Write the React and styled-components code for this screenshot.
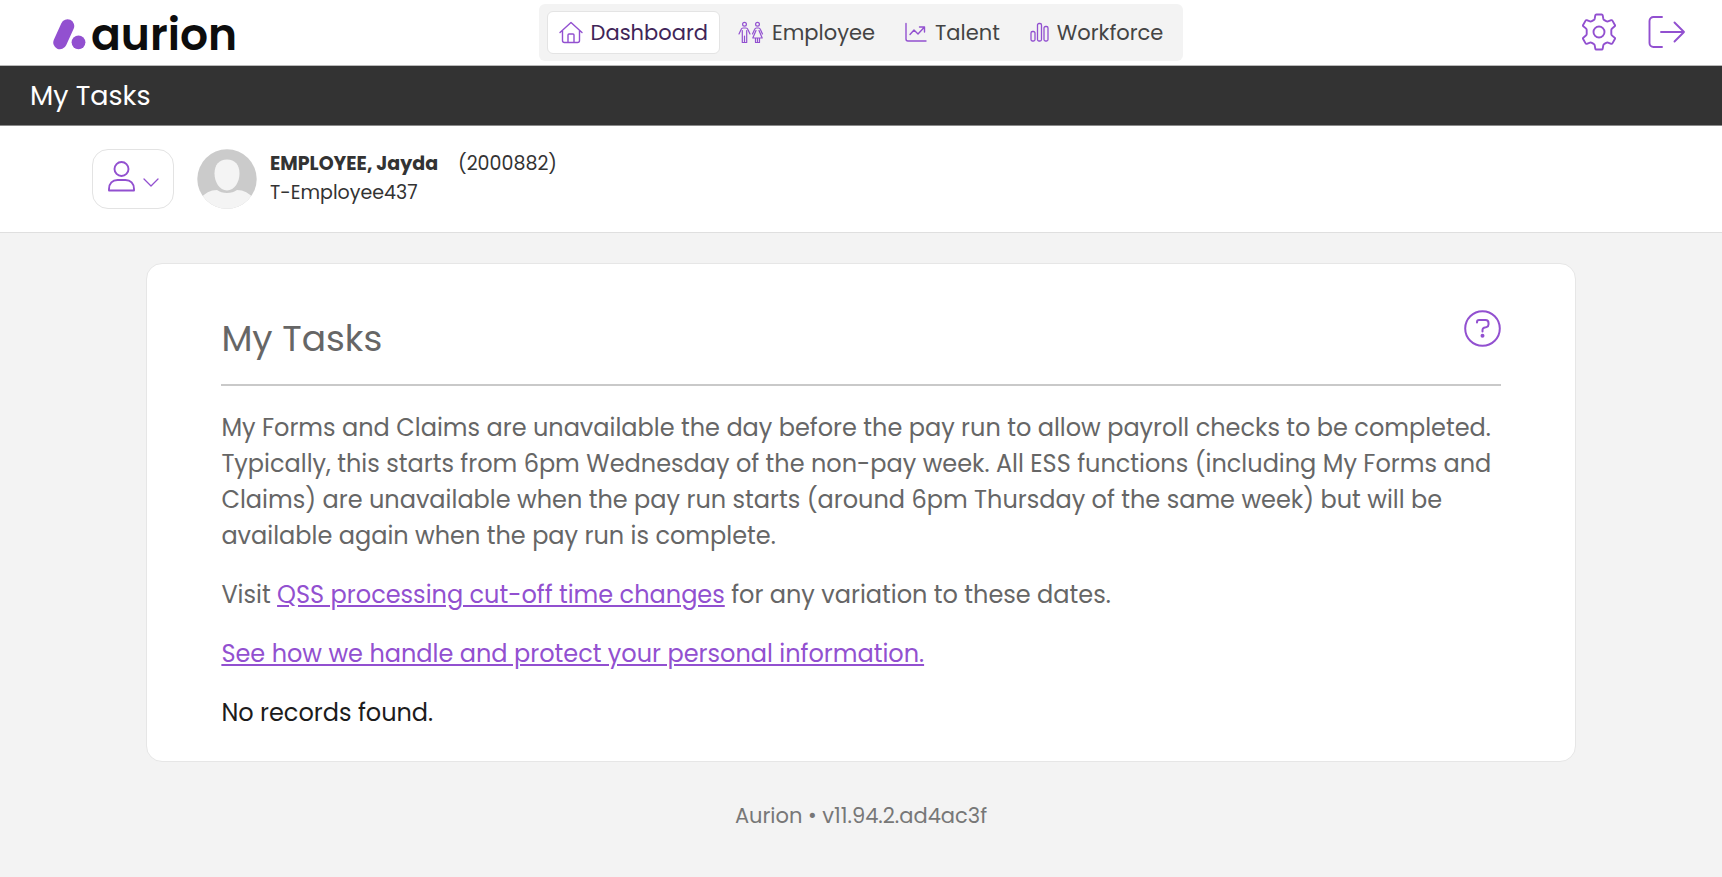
import React from "react";
import styled, { createGlobalStyle, css } from "styled-components";

const purple = "#9250d0";

const GlobalStyle = createGlobalStyle`
  * { box-sizing: border-box; }
  body {
    margin: 0;
    background: #f3f3f3;
    color: #333;
    font-family: Poppins, Inter, "Open Sans", sans-serif;
    font-feature-settings: "cv11" 1;
    font-size: 24px;
    line-height: 36px;
  }
  h1, h2, p { margin: 0; font-weight: 400; }
  button { font: inherit; color: inherit; background: none; border: 0; padding: 0; cursor: pointer; }
  svg { display: block; flex: none; }
`;

const Header = styled.header`
  display: grid;
  grid-template-columns: 1fr auto 1fr;
  align-items: center;
  height: 66px;
  background: #fff;
  border-bottom: 1px solid #b9b9b9;
`;

const Logo = styled.a`
  display: flex;
  align-items: center;
  gap: 4px;
  justify-self: start;
  padding: 4px 0 0 53px;
  color: #0d0d0d;
  text-decoration: none;
`;

const LogoName = styled.span`
  font-size: 44px;
  line-height: 60px;
  font-weight: 600;
`;

const Nav = styled.nav`
  display: flex;
  gap: 6px;
  padding: 7px 8px;
  border-radius: 6px;
  background: #f3f3f3;
`;

const NavItem = styled.a`
  display: flex;
  align-items: center;
  gap: 8px;
  height: 43px;
  padding: 0 11px;
  border: 1px solid transparent;
  border-radius: 6px;
  color: #444;
  font-size: 21px;
  line-height: 32px;
  text-decoration: none;
  ${(p) => p.$active && css`
    background: #fff;
    border-color: #e4e4e4;
    color: #3f2558;
  `}
`;

const Tools = styled.div`
  display: flex;
  align-items: center;
  gap: 32px;
  justify-self: end;
  padding: 0 36px 2px 0;
`;

const TitleBar = styled.h1`
  && {
    padding: 12px 30px;
    background: #333;
    border-bottom: 1px solid #8a8a8a;
    color: #fff;
    font-size: 27px;
    line-height: 35px;
  }
`;

const Person = styled.section`
  display: flex;
  align-items: flex-start;
  padding: 23px 92px;
  height: 107px;
  background: #fff;
  border-bottom: 1px solid #dfdfdf;
`;

const PersonMenu = styled.button`
  && {
    display: flex;
    align-items: center;
    justify-content: center;
    gap: 8px;
    width: 82px;
    height: 60px;
    margin-right: 23px;
    border: 1px solid #e3e3e3;
    border-radius: 16px;
  }
`;

const PersonText = styled.div`
  margin-left: 13px;
  font-size: 19px;
  line-height: 29px;
`;

const PersonId = styled.span`
  margin-left: 20px;
`;

const Card = styled.main`
  width: 83%;
  margin: 30px auto 0;
  padding: 46px 74px 30px;
  background: #fff;
  border: 1px solid #e6e6e6;
  border-radius: 16px;
  color: #666;
`;

const CardHead = styled.div`
  display: flex;
  justify-content: space-between;
  align-items: flex-start;
  padding-bottom: 18px;
  margin-bottom: 24px;
  border-bottom: 2px solid #c9c9c9;
`;

const CardTitle = styled.h2`
  padding-top: 2px;
  font-size: 36px;
  line-height: 54px;
`;

const Paragraph = styled.p`
  && { margin-bottom: 23px; }
`;

const Status = styled.p`
  color: #1c1c1c;
`;

const TextLink = styled.a`
  color: ${purple};
  text-decoration: underline;
`;

const Footer = styled.footer`
  padding: 38px 0 45px;
  color: #777;
  font-size: 21px;
  line-height: 32px;
  text-align: center;
`;

const Icon = ({ w, h, sw = 1, children }) => (
  <svg
    width={w}
    height={h}
    viewBox={`0 0 ${w} ${h}`}
    fill="none"
    stroke={purple}
    strokeWidth={sw}
    strokeLinecap="round"
    strokeLinejoin="round"
    aria-hidden="true"
  >
    {children}
  </svg>
);

const HomeIcon = () => (
  <Icon w={24} h={24} sw={1.4}>
    <path d="M1 11.500 12 1.500l11 10M3.500 9.500V19.500a2 2 0 0 0 2 2h13a2 2 0 0 0 2-2V9.500M9 21.500V14a1 1 0 0 1 1-1h4a1 1 0 0 1 1 1v7.500" />
  </Icon>
);

const EmployeeIcon = () => (
  <Icon w={26} h={24} sw={1.2}>
    <circle cx="6.500" cy="3.300" r="1.900" />
    <path d="M1 13 3.200 8.200Q3.700 7 5 7h3q1.300 0 1.800 1.200L12 13M4.300 9.500V21.500M8.700 9.500V21.500M6.500 15v6.500M4.300 21.500h2.200M6.500 21.500h2.200" />
    <circle cx="19.500" cy="3.300" r="1.900" />
    <path d="M14.500 13l2.200-4.800Q17.200 7 18.300 7h2.400q1.100 0 1.600 1.200L24.500 13M18 9.500l-3.200 7.500h9.400L21 9.500M17.500 17v4.500h2M21.500 17v4.500h-2M19.500 17v4.500" />
  </Icon>
);

const TalentIcon = () => (
  <Icon w={22} h={24} sw={1.4}>
    <path d="M1 2.500v15.500a2 2 0 0 0 2 2h18M5 13.500l4-4.500 4 4 6.500-7M14.500 6h5v5" />
  </Icon>
);

const WorkforceIcon = () => (
  <Icon w={19} h={24} sw={1.3}>
    <rect x="1" y="10.500" width="4" height="9.500" rx="1.500" />
    <rect x="7.500" y="2.500" width="4" height="17.500" rx="1.500" />
    <rect x="14" y="5.500" width="4" height="14.500" rx="1.500" />
  </Icon>
);

const GearIcon = () => (
  <Icon w={34} h={38} sw={1.9}>
    <circle cx="17" cy="19" r="5.500" />
    <path d="M14.300 1.500h5.400q.8 0 1 .8l.6 3.400q.2 1 1.100 1.500l1.800 1q.9.500 1.800.2l3.200-1.200q.8-.3 1.200.4l2.500 4.400q.4.700-.2 1.200l-2.600 2.200q-.8.700-.8 1.700v3.800q0 1 .8 1.700l2.600 2.200q.6.500.2 1.200l-2.500 4.400q-.4.700-1.200.4l-3.200-1.200q-.9-.3-1.800.2l-1.800 1q-.9.500-1.100 1.500l-.6 3.400q-.2.800-1 .8h-5.400q-.8 0-1-.8l-.6-3.400q-.2-1-1.100-1.500l-1.800-1q-.9-.5-1.800-.2l-3.200 1.200q-.8.300-1.200-.4l-2.500-4.400q-.4-.7.200-1.200l2.600-2.200q.8-.7.800-1.700v-3.800q0-1-.8-1.700l-2.600-2.200q-.6-.5-.2-1.200l2.500-4.400q.4-.7 1.200-.4l3.200 1.200q.9.300 1.800-.2l1.800-1q.9-.5 1.100-1.500l.6-3.400q.2-.8 1-.8Z" />
  </Icon>
);

const LogoutIcon = () => (
  <Icon w={38} h={34} sw={1.900}>
    <path d="M14 2H5.500a4 4 0 0 0-4 4v22a4 4 0 0 0 4 4H14M13 17h23M26.500 7.500 36 17l-9.500 9.500" />
  </Icon>
);

const PersonIcon = () => (
  <Icon w={28} h={38} sw={1.900}>
    <circle cx="14.500" cy="9" r="7" />
    <path d="M2 29C2 23.500 5.500 20 10.500 20h8c5 0 8.500 3.500 8.500 9v1.500H2Z" />
  </Icon>
);

const ChevronIcon = () => (
  <Icon w={16} h={20} sw={1.3}>
    <path d="M1 10l7 7 7-7" />
  </Icon>
);

const HelpIcon = () => (
  <Icon w={37} h={37} sw={2}>
    <circle cx="18.500" cy="18.500" r="17.300" />
    <path d="M13 12.500v-.500q0-2 2-2h6.500q3 0 3 3v1.500q0 2-2 2.600l-2.500.7q-1.500.6-1.500 2V21.500" />
    <circle cx="18.500" cy="25.800" r="1" fill={purple} />
  </Icon>
);

const Avatar = () => (
  <svg width="60" height="60" viewBox="0 0 60 60" role="img" aria-label="Profile photo">
    <clipPath id="avatar-clip">
      <circle cx="30" cy="30" r="29.700" />
    </clipPath>
    <g clipPath="url(#avatar-clip)">
      <rect width="60" height="60" fill="#cbcbcb" />
      <path d="M3 50Q10 41 20 41q4 3 10 3t10-3q10 0 17 9v10H3Z" fill="#f4f4f4" />
      <path d="M30 10.500c8 0 12.500 5.500 12.500 14S37.500 41.500 30 41.500 17.500 33 17.500 24.500 22 10.500 30 10.500Z" fill="#f4f4f4" />
    </g>
  </svg>
);

const LogoMark = () => (
  <svg width="34" height="32" viewBox="0 0 34 32" aria-hidden="true">
    <path d="M7 23.500 14.500 7" stroke={purple} strokeWidth="13.500" strokeLinecap="round" />
    <circle cx="25.500" cy="23.300" r="8.500" fill="#fff" />
    <circle cx="25.500" cy="23.300" r="6.900" fill={purple} />
  </svg>
);

const navItems = [
  { label: "Dashboard", Glyph: HomeIcon, active: true },
  { label: "Employee", Glyph: EmployeeIcon },
  { label: "Talent", Glyph: TalentIcon },
  { label: "Workforce", Glyph: WorkforceIcon },
];

export default function App() {
  return (
    <>
      <GlobalStyle />
      <Header>
        <Logo href="#">
          <LogoMark />
          <LogoName>aurion</LogoName>
        </Logo>
        <Nav>
          {navItems.map(({ label, Glyph, active }) => (
            <NavItem key={label} href="#" $active={active}>
              <Glyph />
              {label}
            </NavItem>
          ))}
        </Nav>
        <Tools>
          <button aria-label="Settings"><GearIcon /></button>
          <button aria-label="Log out"><LogoutIcon /></button>
        </Tools>
      </Header>
      <TitleBar>My Tasks</TitleBar>
      <Person>
        <PersonMenu aria-label="Employee menu">
          <PersonIcon />
          <ChevronIcon />
        </PersonMenu>
        <Avatar />
        <PersonText>
          <div>
            <strong>EMPLOYEE, Jayda</strong>
            <PersonId>(2000882)</PersonId>
          </div>
          <div>T-Employee437</div>
        </PersonText>
      </Person>
      <Card>
        <CardHead>
          <CardTitle>My Tasks</CardTitle>
          <button aria-label="Help"><HelpIcon /></button>
        </CardHead>
        <Paragraph>
          My Forms and Claims are unavailable the day before the pay run to allow payroll checks to be
          completed. Typically, this starts from 6pm Wednesday of the non-pay week. All ESS functions
          (including My Forms and Claims) are unavailable when the pay run starts (around 6pm Thursday of
          the same week) but will be available again when the pay run is complete.
        </Paragraph>
        <Paragraph>
          Visit <TextLink href="#">QSS processing cut-off time changes</TextLink> for any variation to
          these dates.
        </Paragraph>
        <Paragraph>
          <TextLink href="#">See how we handle and protect your personal information.</TextLink>
        </Paragraph>
        <Status>No records found.</Status>
      </Card>
      <Footer>Aurion • v11.94.2.ad4ac3f</Footer>
    </>
  );
}
